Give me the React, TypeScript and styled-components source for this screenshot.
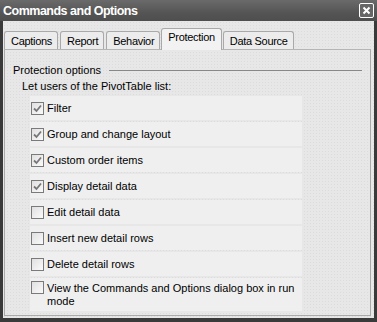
import React from "react";
import styled, { createGlobalStyle } from "styled-components";

const Global = createGlobalStyle`
  html, body { margin: 0; padding: 0; background: #3c3c3c; }
  body { font-family: "Liberation Sans", Arial, sans-serif; }
`;

const Window = styled.div`
  width: 377px;
  height: 322px;
  box-sizing: border-box;
  background: #3a3a3a;
  padding: 0 3px 4px 3px;
  display: flex;
  flex-direction: column;
`;

const TitleBar = styled.div`
  height: 21px;
  margin: 0 -3px;
  padding: 0 3px 0 3px;
  display: flex;
  align-items: center;
  justify-content: space-between;
  background: linear-gradient(#6a6a6a, #555 60%, #4e4e4e);
`;

const Title = styled.div`
  color: #fff;
  font-weight: bold;
  font-size: 12.5px;
  letter-spacing: -0.5px;
  padding-top: 1px;
`;

const CloseButton = styled.div`
  width: 13px;
  height: 13px;
  border: 1px solid #fff;
  border-radius: 2px;
  display: flex;
  align-items: center;
  justify-content: center;
  background: #666;
`;

const Body = styled.div`
  flex: 1;
  background-color: #e7e7e7;
  background-image: radial-gradient(#dcdcdc 0.6px, transparent 0.8px);
  background-size: 3px 3px;
  padding: 7px 3px 2px 1px;
  display: flex;
  flex-direction: column;
`;

const Tabs = styled.div`
  display: flex;
  align-items: flex-end;
  height: 21px;
  gap: 2px;
`;

const Tab = styled.div<{ $active?: boolean }>`
  box-sizing: border-box;
  height: ${(p) => (p.$active ? 22 : 18)}px;
  margin-bottom: ${(p) => (p.$active ? -1 : 0)}px;
  padding: ${(p) => (p.$active ? "0 6px 5px" : "1px 5px 0 6px")};
  display: flex;
  align-items: center;
  font-size: 11px;
  letter-spacing: -0.3px;
  color: #000;
  background: ${(p) => (p.$active ? "#f2f2f2" : "#ececec")};
  border: 1px solid #a9a9a9;
  border-bottom: none;
  border-radius: 3px 3px 0 0;
  margin-left: ${(p) => (p.$active ? -1 : 0)}px;
  margin-right: ${(p) => (p.$active ? -1 : 0)}px;
  position: relative;
  z-index: ${(p) => (p.$active ? 1 : 0)};
`;

const Panel = styled.div`
  flex: 1;
  border: 1px solid #a9a9a9;
  border-top-color: #b5b5b5;
  padding: 13px 8px 0 8px;
  display: flex;
  flex-direction: column;
`;

const GroupHeader = styled.div`
  display: flex;
  align-items: center;
  gap: 8px;
  font-size: 11px;
  line-height: 13px;
  color: #000;
  padding-top: 1px;
`;

const Rule = styled.div`
  flex: 1;
  height: 1px;
  background: #888;
`;

const Lead = styled.div`
  font-size: 11px;
  line-height: 13px;
  color: #000;
  margin: 3px 0 0 9px;
`;

const List = styled.div`
  display: flex;
  flex-direction: column;
  gap: 2px;
  margin: 3px 0 0 17px;
  width: 272px;
`;

const Row = styled.div<{ $tall?: boolean }>`
  background: #efefef;
  min-height: 24px;
  display: flex;
  align-items: ${(p) => (p.$tall ? "flex-start" : "center")};
  padding: ${(p) => (p.$tall ? "3px 0 3px 1px" : "0 0 0 1px")};
  box-sizing: border-box;
  gap: 3px;
`;

const Box = styled.span`
  flex: none;
  width: 13px;
  height: 13px;
  box-sizing: border-box;
  border: 1px solid #7a7a7a;
  background: linear-gradient(135deg, #e0e0e0, #fafafa);
  display: flex;
  align-items: center;
  justify-content: center;
`;

const Label = styled.span`
  font-size: 11px;
  color: #000;
  line-height: 13px;
  padding-top: 1px;
`;

const items: { label: string; checked: boolean; tall?: boolean }[] = [
  { label: "Filter", checked: true },
  { label: "Group and change layout", checked: true },
  { label: "Custom order items", checked: true },
  { label: "Display detail data", checked: true },
  { label: "Edit detail data", checked: false },
  { label: "Insert new detail rows", checked: false },
  { label: "Delete detail rows", checked: false },
  { label: "View the Commands and Options dialog box in run mode", checked: false, tall: true },
];

export default function App() {
  return (
    <>
      <Global />
      <Window>
        <TitleBar>
          <Title>Commands and Options</Title>
          <CloseButton>
            <svg width="9" height="9" viewBox="0 0 9 9">
              <path d="M1.5 1.5 L7.5 7.5 M7.5 1.5 L1.5 7.5" stroke="#fff" strokeWidth="2" />
            </svg>
          </CloseButton>
        </TitleBar>
        <Body>
          <Tabs>
            <Tab>Captions</Tab>
            <Tab>Report</Tab>
            <Tab>Behavior</Tab>
            <Tab $active>Protection</Tab>
            <Tab>Data Source</Tab>
          </Tabs>
          <Panel>
            <GroupHeader>
              Protection options
              <Rule />
            </GroupHeader>
            <Lead>Let users of the PivotTable list:</Lead>
            <List>
              {items.map((it) => (
                <Row key={it.label} $tall={it.tall}>
                  <Box>
                    {it.checked && (
                      <svg width="9" height="9" viewBox="0 0 9 9">
                        <path d="M1 4.5 L3.5 7 L8 1.5" stroke="#777" strokeWidth="1.8" fill="none" />
                      </svg>
                    )}
                  </Box>
                  <Label>{it.label}</Label>
                </Row>
              ))}
            </List>
          </Panel>
        </Body>
      </Window>
    </>
  );
}
